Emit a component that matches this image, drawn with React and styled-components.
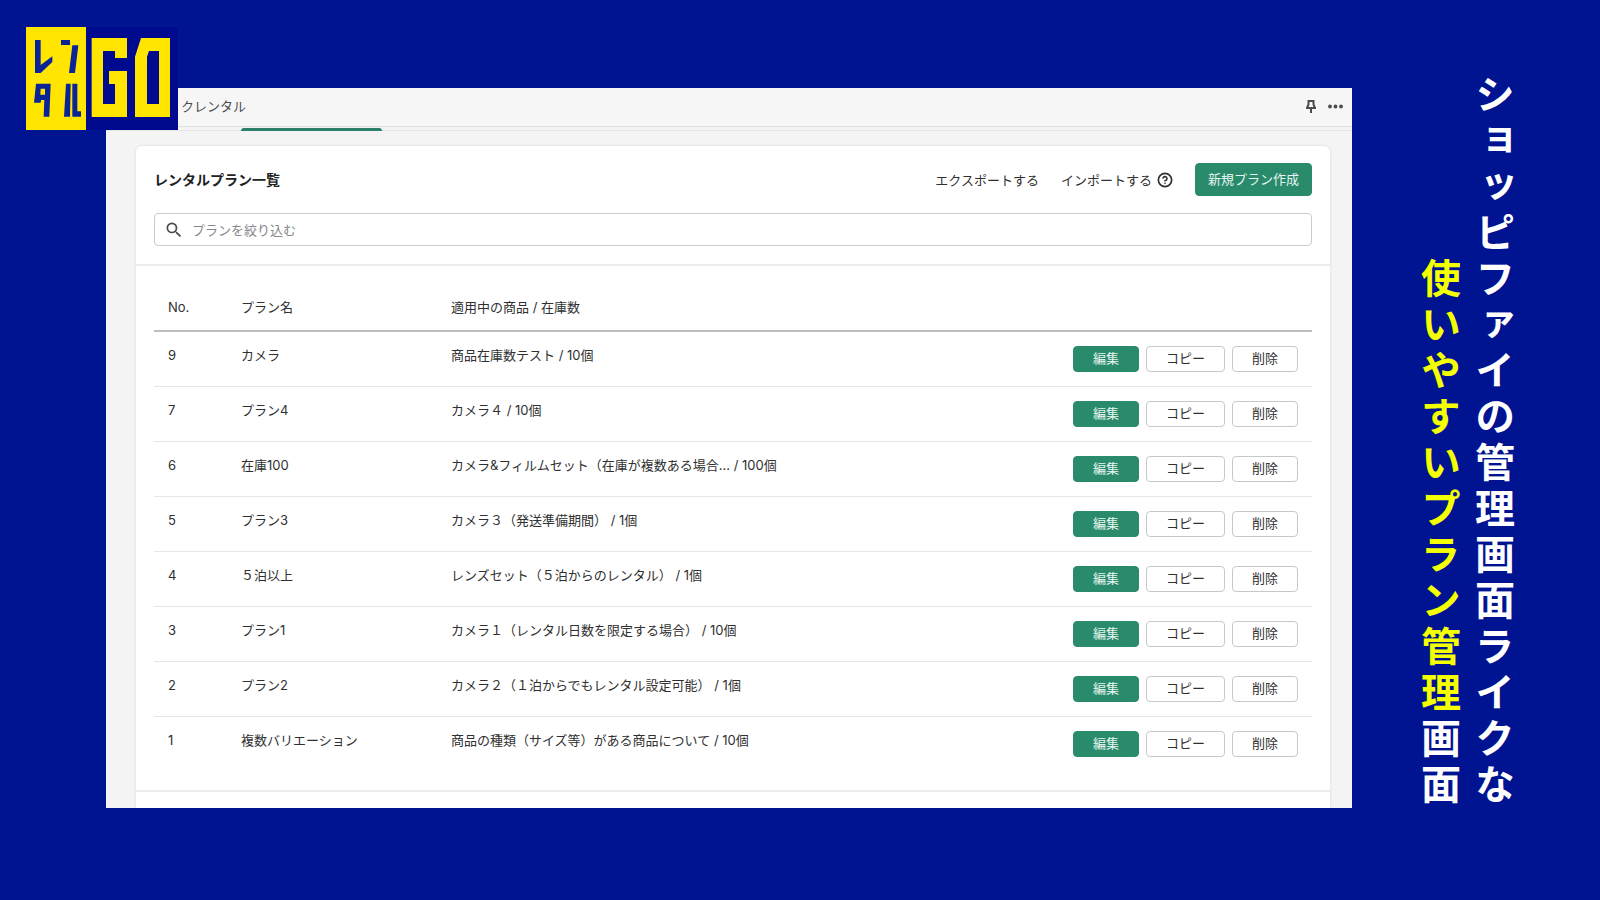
import React from 'react'
import styled, { createGlobalStyle } from 'styled-components'
import { CircleHelp } from 'lucide-react'
import { MdSearch } from 'react-icons/md'

const GlobalStyle = createGlobalStyle`
    * {
        box-sizing: border-box;
    }
    body {
        margin: 0;
        background: #001391;
        font-family: Inter, "Noto Sans CJK JP", sans-serif;
        font-size: 13px;
        line-height: 20px;
        color: #303030;
    }
    button, input {
        font: inherit;
        color: inherit;
    }
`

const Slide = styled.main`
    position: relative;
    display: flex;
    gap: 62px;
    min-height: 100vh;
    padding: 74px 78px 90px 106px;
`

const Logo = styled.svg`
    position: absolute;
    left: 26px;
    top: 27px;
    width: 152px;
    height: 103px;
`

const Panel = styled.section`
    flex: 1;
    min-width: 0;
    display: flex;
    flex-direction: column;
    margin: 14px 0 2px;
    background: #f4f4f5;
`

const TopBar = styled.header`
    display: flex;
    align-items: center;
    justify-content: space-between;
    height: 39px;
    padding: 0 9px 2px 75px;
    background: #f6f6f6;
    border-bottom: 1px solid #dfe0e2;
    color: #4a4c50;
`

const TopActions = styled.div`
    display: flex;
    gap: 12px;
`

const IconButton = styled.button`
    display: flex;
    align-items: center;
    justify-content: center;
    padding: 0;
    border: 0;
    background: none;
`

const TabStrip = styled.nav`
    display: flex;
    align-items: flex-end;
    height: 4px;
    padding-left: 135px;
    box-shadow: inset 0 -1px #e3e4e6;
`

const ActiveTab = styled.a`
    width: 141px;
    height: 3px;
    background: #2a8068;
    border-radius: 3px 3px 0 0;
`

const Card = styled.div`
    flex: 1;
    margin: 15px 22px 0 30px;
    background: #fff;
    border-radius: 6px 6px 0 0;
    box-shadow: 0 0 3px rgba(0, 0, 0, 0.12);
    clip-path: inset(-4px -4px 0 -4px);
`

const CardHead = styled.div`
    padding: 17px 18px 18px;
    border-bottom: 2px solid #ebecee;
`

const TitleRow = styled.div`
    display: flex;
    align-items: center;
    margin-bottom: 17px;
`

const Title = styled.h1`
    flex: 1;
    margin: 0;
    font-size: 14px;
    font-weight: 700;
    line-height: 20px;
    color: #202223;
`

const TextButton = styled.button`
    display: flex;
    align-items: center;
    gap: 5px;
    margin-right: 22px;
    padding: 0;
    border: 0;
    background: none;
`

const Button = styled.button`
    height: ${({ $large }) => ($large ? '33px' : '26px')};
    padding: 0 ${({ $large }) => ($large ? '12px' : '19px')} 2px;
    border: 1px solid ${({ $primary }) => ($primary ? '#2a8a6c' : '#c6c9cc')};
    border-radius: 4px;
    background: ${({ $primary }) => ($primary ? '#2a8a6c' : '#fff')};
    color: ${({ $primary }) => ($primary ? '#e6f6f0' : '#303030')};
    white-space: nowrap;
`

const SearchBox = styled.label`
    display: flex;
    align-items: center;
    gap: 8px;
    height: 33px;
    padding: 0 9px;
    border: 1px solid #c9cccf;
    border-radius: 4px;
    color: #4a4c50;
`

const SearchInput = styled.input`
    flex: 1;
    padding: 0;
    border: 0;
    outline: 0;
    background: none;

    &::placeholder {
        color: #85888c;
        opacity: 1;
    }
`

const TableArea = styled.div`
    padding: 17px 18px 18px;
    border-bottom: 2px solid #ebecee;
`

const Table = styled.table`
    width: 100%;
    border-spacing: 0;
    table-layout: fixed;

    th, td {
        padding: 13px 0 0 14px;
        text-align: left;
        vertical-align: top;
        font-weight: 400;
        white-space: nowrap;
    }
    th {
        height: 49px;
        padding-top: 14px;
        border-bottom: 2px solid #bcbec0;
    }
    td {
        height: 55px;
        border-bottom: 1px solid #e4e6e8;
    }
    tr:last-child td {
        border-bottom: 0;
    }
`

const Col = styled.col`
    width: ${({ $width }) => $width};
`

const Actions = styled.div`
    display: flex;
    justify-content: flex-end;
    gap: 7px;
    padding: 1px 14px 0 0;
`

const Copy = styled.h2`
    flex: none;
    margin: 0;
    writing-mode: vertical-rl;
    text-align: end;
    font-family: "Noto Sans CJK JP", sans-serif;
    font-size: 40px;
    font-weight: 700;
    line-height: 54px;
    letter-spacing: 6px;
    color: #fff;
`

const CopyLine = styled.span`
    display: block;
`

const Highlight = styled.span`
    color: #f4ff00;
`

const plans = [
    { no: 9, name: 'カメラ', item: '商品在庫数テスト / 10個' },
    { no: 7, name: 'プラン4', item: 'カメラ４ / 10個' },
    { no: 6, name: '在庫100', item: 'カメラ&フィルムセット（在庫が複数ある場合... / 100個' },
    { no: 5, name: 'プラン3', item: 'カメラ３（発送準備期間） / 1個' },
    { no: 4, name: '５泊以上', item: 'レンズセット（５泊からのレンタル） / 1個' },
    { no: 3, name: 'プラン1', item: 'カメラ１（レンタル日数を限定する場合） / 10個' },
    { no: 2, name: 'プラン2', item: 'カメラ２（１泊からでもレンタル設定可能） / 1個' },
    { no: 1, name: '複数バリエーション', item: '商品の種類（サイズ等）がある商品について / 10個' },
]

function RentalGoLogo() {
    return (
        <Logo viewBox="0 0 456 309" role="img" aria-label="レンタルGO">
            <rect width="180" height="309" fill="#ffe500" />
            <rect x="180" width="276" height="309" fill="#000a8f" />
            <g fill="#0a2396">
                <path d="M27 39h17v75l35-26v17l-35 33H27z" />
                <path d="M105 39h27v15h-27zM139 55h18l-10 83h-18z" />
                <path fillRule="evenodd" d="M30 170h44l-4 99H53l2-50H45l-1 8H24zM44 185l-1 18h14v-18z" />
                <path d="M120 170h14l-2 99h-18zM139 170h15v83h11v16h-26z" />
            </g>
            <g fill="#ffe500">
                <path d="M197 33h106v60h-36V72h-36v159h36v-60h-18v-39h54v138H197z" />
                <path fillRule="evenodd" d="M345 33h87v237H327V89zM369 72l-6 17v142h36V72z" />
            </g>
        </Logo>
    )
}

function PinIcon() {
    return (
        <svg width="10" height="13" viewBox="0 0 20 26" fill="none" stroke="currentColor" strokeWidth="4">
            <path d="M3 2h14M5 2v7l-3 7h16l-3-7V2M10 16v10" />
        </svg>
    )
}

function DotsIcon() {
    return (
        <svg width="15" height="5" viewBox="0 0 15 5" fill="currentColor">
            <circle cx="2" cy="2.5" r="1.9" />
            <circle cx="7.5" cy="2.5" r="1.9" />
            <circle cx="13" cy="2.5" r="1.9" />
        </svg>
    )
}

function PlanTable() {
    return (
        <Table>
            <colgroup>
                <Col $width="73px" />
                <Col $width="210px" />
                <Col />
                <Col $width="260px" />
            </colgroup>
            <thead>
                <tr>
                    <th scope="col">No.</th>
                    <th scope="col">プラン名</th>
                    <th scope="col">適用中の商品 / 在庫数</th>
                    <th aria-label="操作"></th>
                </tr>
            </thead>
            <tbody>
                {plans.map(plan => (
                    <tr key={plan.no}>
                        <td>{plan.no}</td>
                        <td>{plan.name}</td>
                        <td>{plan.item}</td>
                        <td>
                            <Actions>
                                <Button $primary>編集</Button>
                                <Button>コピー</Button>
                                <Button>削除</Button>
                            </Actions>
                        </td>
                    </tr>
                ))}
            </tbody>
        </Table>
    )
}

function App() {
    return (
        <>
            <GlobalStyle />
            <Slide>
                <Panel>
                    <TopBar>
                        <span>クレンタル</span>
                        <TopActions>
                            <IconButton aria-label="固定"><PinIcon /></IconButton>
                            <IconButton aria-label="メニュー"><DotsIcon /></IconButton>
                        </TopActions>
                    </TopBar>
                    <TabStrip>
                        <ActiveTab href="#plans" aria-label="プラン" />
                    </TabStrip>
                    <Card id="plans">
                        <CardHead>
                            <TitleRow>
                                <Title>レンタルプラン一覧</Title>
                                <TextButton>エクスポートする</TextButton>
                                <TextButton>
                                    インポートする
                                    <CircleHelp size={16} strokeWidth={2.5} />
                                </TextButton>
                                <Button $primary $large>新規プラン作成</Button>
                            </TitleRow>
                            <SearchBox>
                                <MdSearch size={20} />
                                <SearchInput type="text" aria-label="プランを絞り込む" placeholder="プランを絞り込む" />
                            </SearchBox>
                        </CardHead>
                        <TableArea>
                            <PlanTable />
                        </TableArea>
                    </Card>
                </Panel>
                <Copy>
                    <CopyLine>ショッピファイの管理画面ライクな</CopyLine>
                    <CopyLine><Highlight>使いやすいプラン管理</Highlight>画面</CopyLine>
                </Copy>
                <RentalGoLogo />
            </Slide>
        </>
    )
}

export default App
